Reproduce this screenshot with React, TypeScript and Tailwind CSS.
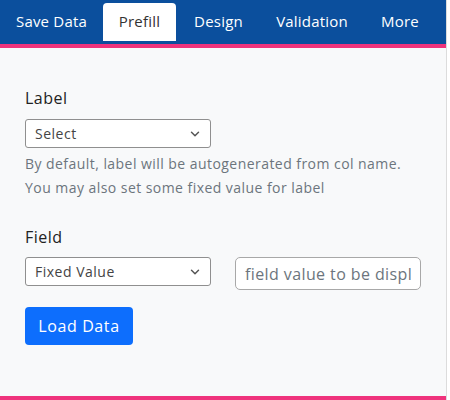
import { ChevronDown } from "lucide-react"

const tabs = [
  { name: "Save Data", w: "w-[103px]" },
  { name: "Prefill", w: "w-[73px]", active: true },
  { name: "Design", w: "w-[85px]" },
  { name: "Validation", w: "w-[102px]" },
  { name: "More", w: "w-[74px]" },
]

function FakeSelect({ value }: { value: string }) {
  return (
    <div className="flex h-[29px] w-[186px] items-center justify-between rounded-[3px] border border-[#8f8f8f] bg-white pl-[9px] pr-[8px] text-[14px] tracking-[0.5px] text-[#444]">
      <span>{value}</span>
      <ChevronDown size={14} strokeWidth={2.5} className="text-[#555]" />
    </div>
  )
}

export default function App() {
  return (
    <div
      className="h-[400px] w-[450px] bg-white"
      style={{ fontFamily: "'Open Sans', 'Liberation Sans', sans-serif" }}
    >
      <div className="w-[447px] border-r border-[#dcdcdc]">
        <div className="flex h-[44px] items-end bg-[#0b4f9d] pb-[3px]">
          {tabs.map((t) => (
            <div
              key={t.name}
              className={
                t.active
                  ? `${t.w} flex h-[38px] items-center justify-center rounded-t-[4px] bg-white pb-[1px] text-[15px] tracking-[0.2px] text-[#333]`
                  : `${t.w} flex h-[38px] items-center justify-center pb-[1px] text-[15px] tracking-[0.2px] text-white`
              }
            >
              {t.name}
            </div>
          ))}
        </div>
        <div className="h-[4px] bg-[#ef337c]" />
        <div className="h-[348px] bg-[#f8f9fa] px-[25px] pt-[38px]">
          <div className="mb-[9px] text-[16px] leading-[24px] tracking-[0.5px] text-[#222]">Label</div>
          <FakeSelect value="Select" />
          <p className="mt-[4px] text-[14px] leading-[24px] tracking-[0.45px] text-[#6c757d]">
            By default, label will be autogenerated from col name.
            <br />
            You may also set some fixed value for label
          </p>
          <div className="mt-[25px] mb-[8px] text-[16px] leading-[24px] tracking-[0.5px] text-[#222]">Field</div>
          <div className="flex items-start gap-[24px]">
            <FakeSelect value="Fixed Value" />
            <input
              placeholder="field value to be displayed"
              className="h-[33px] w-[186px] rounded-[5px] border border-[#a8a8a8] bg-white px-[9px] text-[16px] tracking-[0.4px] text-[#333] placeholder:text-[#6c757d] outline-none"
            />
          </div>
          <button className="mt-[17px] h-[38px] w-[108px] rounded-[4px] bg-[#0d6efd] text-[16px] tracking-[0.6px] text-white">
            Load Data
          </button>
        </div>
        <div className="h-[4px] bg-[#ef337c]" />
      </div>
    </div>
  )
}
